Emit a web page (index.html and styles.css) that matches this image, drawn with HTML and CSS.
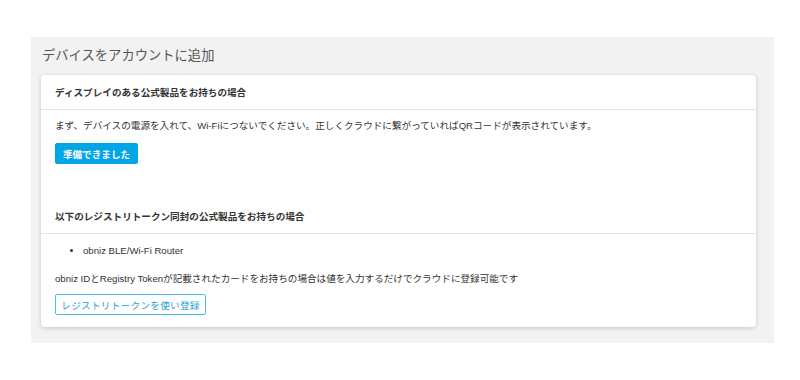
FILE: index.html
```html
<!DOCTYPE html>
<html lang="ja">
<head>
<meta charset="utf-8">
<link rel="stylesheet" href="styles.css">
</head>
<body>
<div class="panel">
  <h1 class="title">デバイスをアカウントに追加</h1>
  <div class="card">
    <div class="card-header">ディスプレイのある公式製品をお持ちの場合</div>
    <div class="card-body first">
      <p class="text">まず、デバイスの電源を入れて、Wi-Fiにつないでください。正しくクラウドに繋がっていればQRコードが表示されています。</p>
      <button class="btn btn-primary">準備できました</button>
    </div>
    <div class="card-header">以下のレジストリトークン同封の公式製品をお持ちの場合</div>
    <div class="card-body last">
      <ul class="list">
        <li>obniz BLE/Wi-Fi Router</li>
      </ul>
      <p class="text tight">obniz IDとRegistry Tokenが記載されたカードをお持ちの場合は値を入力するだけでクラウドに登録可能です</p>
      <button class="btn btn-outline">レジストリトークンを使い登録</button>
    </div>
  </div>
</div>
</body>
</html>
```
FILE: styles.css
```css
html, body {
  margin: 0;
  padding: 0;
  background: #ffffff;
}
body {
  font-family: "Liberation Sans", "Noto Sans CJK JP", sans-serif;
  color: #333333;
}
.panel {
  margin: 37px 0 0 31px;
  width: 743px;
  box-sizing: border-box;
  background: #f2f2f2;
  padding: 9px 18px 16px 10px;
}
.title {
  margin: 0 0 9px 1px;
  font-size: 13.3px;
  line-height: 20px;
  font-weight: normal;
  color: #555555;
}
.card {
  background: #ffffff;
  border-radius: 4px;
  box-shadow: 0 1px 4px rgba(0, 0, 0, 0.18);
}
.card-header {
  height: 35px;
  box-sizing: border-box;
  border-bottom: 1px solid #e3e3e3;
  padding: 0 14px;
  display: flex;
  align-items: center;
  font-size: 9.6px;
  font-weight: bold;
  color: #333333;
}
.card-body {
  padding: 9px 14px 0;
}
.card-body.first {
  padding-bottom: 35px;
}
.card-body.last {
  padding-top: 10px;
  padding-bottom: 12px;
}
.text {
  margin: 0 0 10px;
  font-size: 9.6px;
  line-height: 14px;
  color: #333333;
}
.text.tight {
  margin-bottom: 8px;
}
.list {
  margin: 0 0 14px;
  padding-left: 28px;
  font-size: 9.6px;
  line-height: 14px;
}
.btn {
  font-family: "Liberation Sans", "Noto Sans CJK JP", sans-serif;
  font-size: 9.6px;
  height: 21px;
  border-radius: 2px;
  padding: 0;
  display: block;
  white-space: nowrap;
  text-align: center;
  cursor: pointer;
}
.btn-primary {
  width: 83px;
  background: #00a6e6;
  border: 1px solid #00a6e6;
  color: #ffffff;
  font-weight: bold;
}
.btn-outline {
  width: 151px;
  background: #ffffff;
  border: 1px solid #4fbbe8;
  color: #1f9fd6;
  letter-spacing: 0.3px;
}
```
